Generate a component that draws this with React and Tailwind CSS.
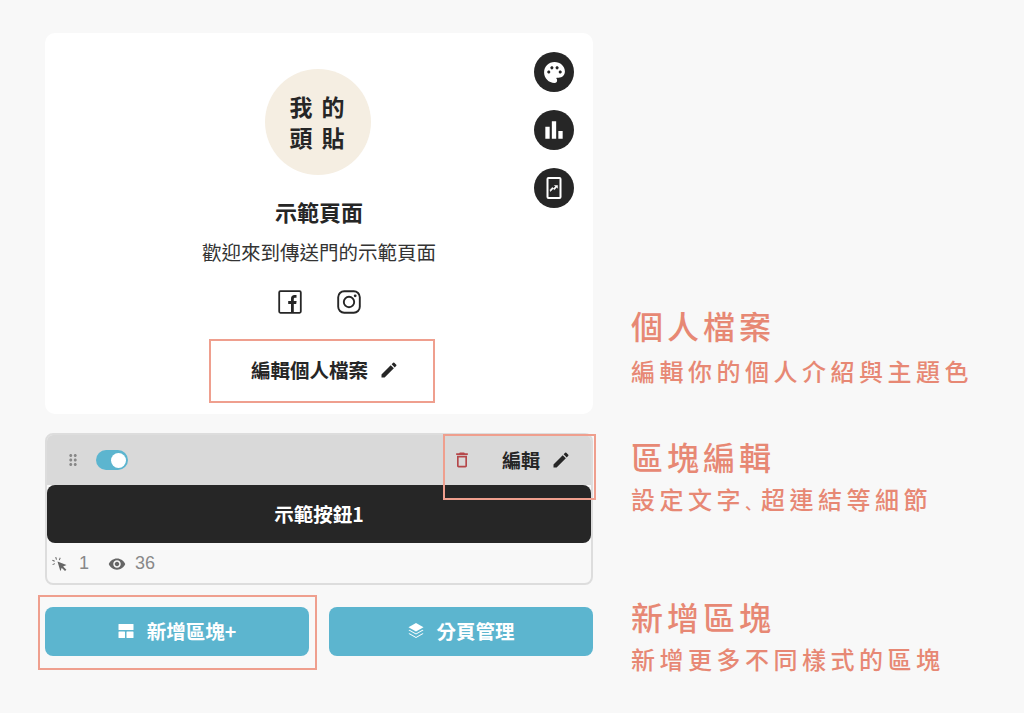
import React from "react";
import { MdPalette, MdBarChart, MdEdit, MdDragIndicator, MdDeleteOutline, MdRemoveRedEye } from "react-icons/md";

const font = { fontFamily: '"Noto Sans CJK TC", sans-serif' };

function RoundIcon({ children }) {
  return (
    <div className="w-[40px] h-[40px] rounded-full bg-[#262626] text-white flex items-center justify-center">
      {children}
    </div>
  );
}

function PhoneChart() {
  return (
    <svg width="24" height="24" viewBox="0 0 24 24" fill="none">
      <rect x="5.500" y="2" width="13" height="20" rx="1" stroke="white" strokeWidth="2" />
      <path d="M8.500 15.500l2.600-2.800 1.500 1 2-2.400 1 1V9.500h-3.200l1 1-1.700 1.900-1.500-1-2.200 2.500z" fill="white" stroke="white" strokeWidth=".5" />
    </svg>
  );
}

function Facebook() {
  return (
    <svg width="24" height="24" viewBox="0 0 24 24" fill="none">
      <rect x="1.200" y="1.200" width="21.600" height="21.600" rx="1.200" stroke="#262626" strokeWidth="1.800" />
      <path d="M13 22v-8h-2.800v-3H13V8.600C13 6.200 14.400 5 16.500 5c.9 0 1.700.1 2 .1v2.700h-1.400c-1.100 0-1.300.6-1.300 1.400V11h2.800l-.4 3h-2.400v8z" fill="#262626" />
    </svg>
  );
}

function Instagram() {
  return (
    <svg width="24" height="24" viewBox="0 0 24 24" fill="none">
      <rect x="1.200" y="1.200" width="21.600" height="21.600" rx="6" stroke="#262626" strokeWidth="1.900" />
      <circle cx="12" cy="12" r="5.200" stroke="#262626" strokeWidth="1.900" />
      <circle cx="18.200" cy="5.800" r="1.400" fill="#262626" />
    </svg>
  );
}

function Blocks() {
  return (
    <svg width="16" height="16" viewBox="0 0 16 16" fill="white">
      <rect x="0.500" y="1" width="15" height="6" rx=".5" />
      <rect x="0.500" y="8.500" width="6.500" height="6.500" rx=".5" />
      <rect x="8.500" y="8.500" width="7" height="6.500" rx=".5" />
    </svg>
  );
}

function LayersIcon() {
  return (
    <svg width="18" height="18" viewBox="0 0 18 18" fill="white">
      <path d="M9 1l7.500 4.300L9 9.600 1.500 5.300z" />
      <path d="M1.500 8.300l1-.6L9 11.400l6.500-3.700 1 .6L9 12.600z" />
      <path d="M1.500 11.800l1-.6L9 14.900l6.500-3.700 1 .6L9 16.100z" />
    </svg>
  );
}

function ClickIcon() {
  return (
    <svg width="16" height="16" viewBox="0 0 16 16" fill="#666666">
      <path d="M5.500 5.500l9 3.500-3.400 1.400 3.300 3.300-1.400 1.400-3.300-3.300-1.300 3.500z" />
      <path d="M4.200 1l.8 2.400-1 .3L3.200 1.300zM.6 3.800l2.300 1-.4.900-2.300-1zM.4 8.200l2.300-1 .4.900-2.300 1zM7.800 1.600l.9.4-1 2.300-.9-.4z" />
    </svg>
  );
}

function Note({ title, sub, className, subClass }) {
  return (
    <div className={className}>
      <div className="text-[32px] leading-[40px] tracking-[4px] font-medium text-[#e78874]">{title}</div>
      <div className={"text-[24px] leading-[32px] tracking-[4.500px] font-medium text-[#e78874] " + subClass}>{sub}</div>
    </div>
  );
}

export default function App() {
  return (
    <div className="relative w-[1024px] h-[713px] bg-[#f8f8f8] overflow-hidden flex items-start pl-[45px] pt-[33px]" style={font}>
      <div className="w-[548px] flex flex-col shrink-0">
        <div className="relative h-[381px] bg-white rounded-[10px] flex flex-col items-center">
          <div className="absolute right-[19px] top-[19px] flex flex-col gap-[18px]">
            <RoundIcon><MdPalette size={25} /></RoundIcon>
            <RoundIcon><MdBarChart size={26} /></RoundIcon>
            <RoundIcon><PhoneChart /></RoundIcon>
          </div>
          <div className="mt-[36px] mr-[2px] w-[106px] h-[106px] rounded-full bg-[#f5eee2] flex items-center justify-center text-center text-[23px] leading-[31px] tracking-[2px] font-bold text-[#262626]">
            <div>我 的<br />頭 貼</div>
          </div>
          <div className="mt-[20px] text-[22px] leading-[32px] font-bold text-[#262626]">示範頁面</div>
          <div className="mt-[9px] text-[19.500px] leading-[32px] text-[#333333]">歡迎來到傳送門的示範頁面</div>
          <div className="mt-[22px] flex gap-[35px]">
            <Facebook />
            <Instagram />
          </div>
          <div className="mt-[44px] ml-[12px] flex items-center gap-[11px] text-[19.500px] leading-[24px] font-bold text-[#262626]">
            編輯個人檔案<MdEdit size={20} />
          </div>
        </div>

        <div className="mt-[19px] h-[152px] rounded-[8px] border-2 border-[#dddddd] flex flex-col bg-[#f8f8f8] overflow-hidden">
          <div className="h-[50px] bg-[#d9d9d9] flex items-center pl-[17px] pr-[20px]">
            <MdDragIndicator size={18} className="text-[#888888]" />
            <div className="ml-[14px] w-[32px] h-[20px] rounded-full bg-[#5cb5cf] flex items-center justify-end pr-[2px]">
              <div className="w-[15px] h-[15px] rounded-full bg-white" />
            </div>
            <MdDeleteOutline size={20} className="ml-auto text-[#b5474a]" />
            <div className="ml-[30px] text-[19px] leading-[24px] font-bold text-[#262626]">編輯</div>
            <MdEdit size={20} className="ml-[11px] text-[#262626]" />
          </div>
          <div className="h-[58px] bg-[#262626] rounded-[8px] flex items-center justify-center text-white text-[19.500px] font-bold">示範按鈕1</div>
          <div className="flex-1 flex items-center pl-[5px] pt-[1px] text-[18px] text-[#888888]" style={{ fontFamily: '"Liberation Sans", sans-serif' }}>
            <ClickIcon />
            <span className="ml-[11px]">1</span>
            <MdRemoveRedEye size={18} className="ml-[19px] text-[#666666]" />
            <span className="ml-[9px]">36</span>
          </div>
        </div>

        <div className="mt-[22px] flex gap-[20px]">
          <div className="w-[264px] h-[49px] pb-[2px] rounded-[8px] bg-[#5cb5cf] flex items-center justify-center gap-[13px] text-white text-[19.500px] font-bold">
            <Blocks />新增區塊+
          </div>
          <div className="w-[264px] h-[49px] pb-[2px] rounded-[8px] bg-[#5cb5cf] flex items-center justify-center gap-[11px] text-white text-[19.500px] font-bold">
            <LayersIcon />分頁管理
          </div>
        </div>
      </div>

      <div className="ml-[38px] flex flex-col">
        <Note title="個人檔案" sub="編輯你的個人介紹與主題色" className="mt-[272px]" subClass="mt-[10px]" />
        <Note
          title="區塊編輯"
          sub={<>設定文字<span className="text-[16px] tracking-normal font-['Noto_Sans_CJK_JP']">、</span>超連結等細節</>}
          className="mt-[49px]"
          subClass="mt-[7px]"
        />
        <Note title="新增區塊" sub="新增更多不同樣式的區塊" className="mt-[78px]" subClass="mt-[7px]" />
      </div>

      <div className="absolute left-[209px] top-[339px] w-[226px] h-[64px] border-2 border-[#ef9f8e]" />
      <div className="absolute left-[443px] top-[434px] w-[153px] h-[66px] border-2 border-[#ef9f8e]" />
      <div className="absolute left-[38px] top-[595px] w-[279px] h-[75px] border-2 border-[#ef9f8e]" />
    </div>
  );
}
